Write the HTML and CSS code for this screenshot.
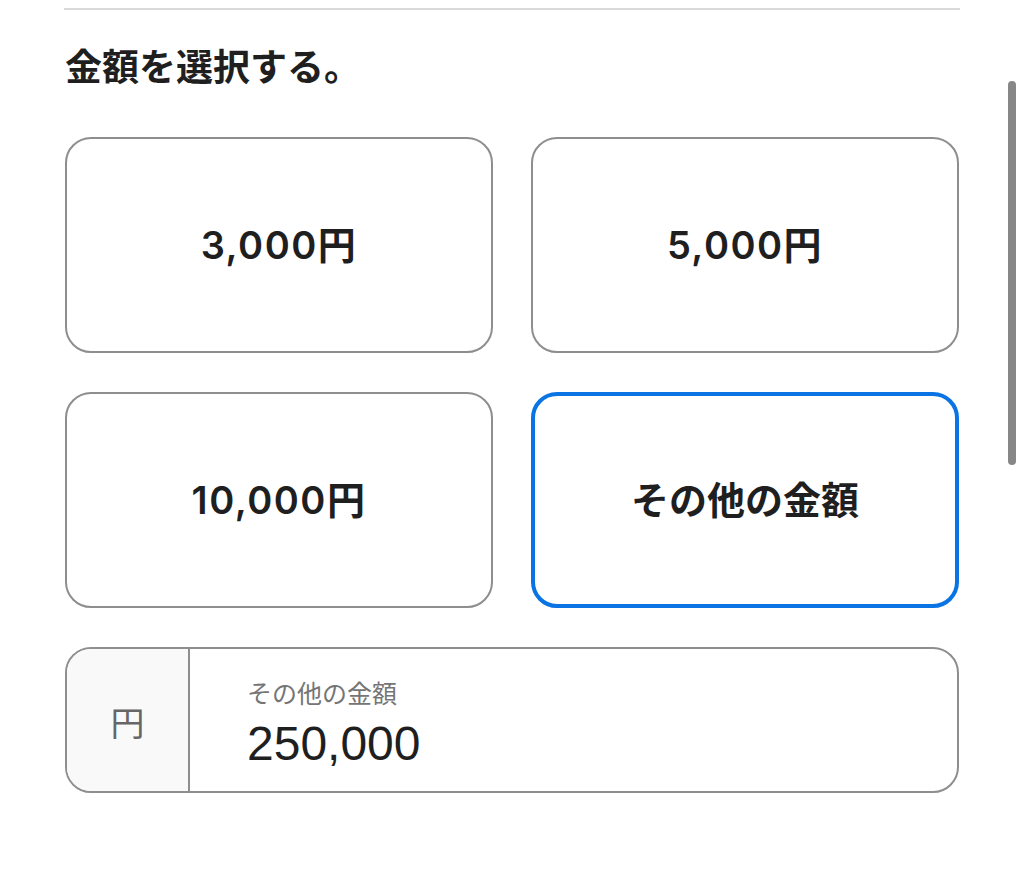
FILE: index.html
```html
<!DOCTYPE html>
<html lang="ja">
<head>
<meta charset="utf-8">
<link rel="stylesheet" href="styles.css">
</head>
<body>
<div class="page">
  <section class="amount">
    <h2 class="title">金額を選択する。</h2>
    <div class="options">
      <button class="option">3,000円</button>
      <button class="option">5,000円</button>
      <button class="option">10,000円</button>
      <button class="option selected">その他の金額</button>
    </div>
    <div class="field">
      <div class="addon">円</div>
      <div class="input">
        <div class="label">その他の金額</div>
        <div class="value">250,000</div>
      </div>
    </div>
  </section>
  <div class="scrollbar"></div>
</div>
</body>
</html>
```
FILE: styles.css
```css
html, body {
  margin: 0;
  padding: 0;
  background: #fff;
}
body {
  font-family: "Noto Sans CJK JP", "Noto Sans", sans-serif;
  color: #1f1f1f;
}
.page {
  position: relative;
  width: 1024px;
  height: 891px;
  overflow: hidden;
}
.amount {
  margin: 8px 0 0 64px;
  width: 896px;
  border-top: 2px solid #d9d9dc;
}
.title {
  margin: 30px 0 0 1px;
  font-size: 37px;
  line-height: 50px;
  font-weight: 700;
  color: #1f1f1f;
}
.options {
  margin: 47px 0 0 1px;
  width: 894px;
  display: grid;
  grid-template-columns: 1fr 1fr;
  column-gap: 38px;
  row-gap: 39px;
}
.option {
  height: 216px;
  box-sizing: border-box;
  border: 2px solid #8e8e8e;
  border-radius: 26px;
  background: #fff;
  font-family: Inter, "Noto Sans CJK JP", sans-serif;
  font-size: 38px;
  font-weight: 600;
  letter-spacing: 1.5px;
  color: #1f1f1f;
  padding: 0 0 6px;
  display: flex;
  align-items: center;
  justify-content: center;
}
.option.selected {
  border: 4px solid #0a74e4;
  font-family: "Noto Sans CJK JP", sans-serif;
  font-weight: 700;
  font-size: 38px;
  letter-spacing: 0;
}
.field {
  margin: 39px 0 0 1px;
  width: 894px;
  height: 146px;
  box-sizing: border-box;
  border: 2px solid #8e8e8e;
  border-radius: 26px;
  display: flex;
  overflow: hidden;
}
.addon {
  width: 123px;
  flex: none;
  box-sizing: border-box;
  background: #f9f9f9;
  border-right: 2px solid #8e8e8e;
  display: flex;
  align-items: center;
  justify-content: center;
  padding-top: 2px;
  font-size: 34px;
  color: #666;
}
.input {
  padding: 26px 0 0 57px;
}
.label {
  font-size: 25px;
  line-height: 34px;
  color: #757575;
}
.value {
  font-family: "Liberation Sans", Arial, sans-serif;
  font-size: 48px;
  line-height: 70px;
  color: #1f1f1f;
}
.scrollbar {
  position: absolute;
  left: 1008px;
  top: 81px;
  width: 8px;
  height: 384px;
  border-radius: 4px;
  background: #878787;
}
```
